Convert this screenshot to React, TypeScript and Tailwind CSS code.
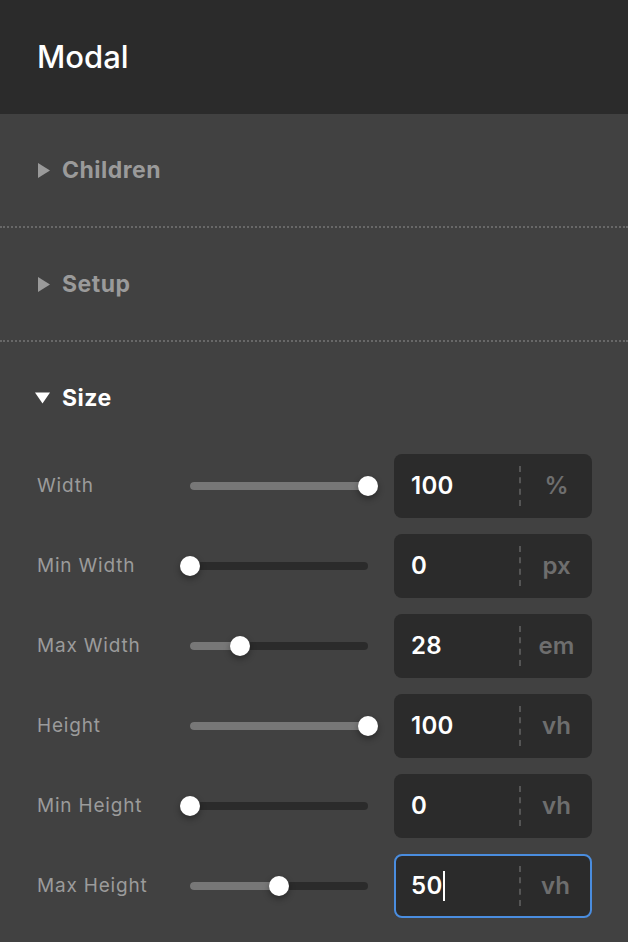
const rows = [
  { label: "Width", value: "100", unit: "%", pct: 100 },
  { label: "Min Width", value: "0", unit: "px", pct: 0 },
  { label: "Max Width", value: "28", unit: "em", pct: 28 },
  { label: "Height", value: "100", unit: "vh", pct: 100 },
  { label: "Min Height", value: "0", unit: "vh", pct: 0 },
  { label: "Max Height", value: "50", unit: "vh", pct: 50, focused: true },
];

const Section = ({ title, open }: { title: string; open?: boolean }) => (
  <div className="h-[112px] flex items-center pl-[35px] gap-[12px]">
    {open ? (
      <svg width="15" height="12" viewBox="0 0 15 12">
        <path d="M0 0.5 H15 L7.5 11.5 Z" fill="#ffffff" />
      </svg>
    ) : (
      <svg width="12" height="15" viewBox="0 0 12 15" className="ml-[3px]">
        <path d="M0 0 L12 7.5 L0 15 Z" fill="#9a9a9a" />
      </svg>
    )}
    <span className={`text-[23px] font-bold tracking-[0.5px] ${open ? "text-white" : "text-[#9a9a9a]"}`}>{title}</span>
  </div>
);

const Row = ({ row }: { row: (typeof rows)[number] }) => (
  <div className="h-[64px] flex items-center">
    <div className="w-[190px] shrink-0 pl-[37px] text-[19px] text-[#9b9b9b] tracking-[0.8px]">{row.label}</div>
    <div className="relative shrink-0 w-[178px] h-[8px] rounded-full bg-[#2b2b2b]">
      <div className="absolute left-0 top-0 h-full rounded-full bg-[#777777]" style={{ width: `${row.pct}%` }} />
      <div
        className="absolute top-1/2 w-[20px] h-[20px] -ml-[10px] -mt-[10px] rounded-full bg-white shadow-[0_3px_6px_rgba(0,0,0,0.35)]"
        style={{ left: `${row.pct}%` }}
      />
    </div>
    <div
      className={`ml-[26px] shrink-0 w-[198px] h-[64px] rounded-[8px] bg-[#2b2b2b] flex items-center ${
        row.focused ? "border-2 border-[#4a8ddf]" : ""
      }`}
    >
      <div className={`h-full flex items-center ${row.focused ? "w-[123px] pl-[15px]" : "w-[125px] pl-[17px]"}`}>
        <span className="text-[24px] font-semibold text-white tracking-[0.3px]">{row.value}</span>
        {row.focused && <span className="w-[2px] h-[30px] bg-white" />}
      </div>
      <div className="h-[40px] border-l-2 border-dashed border-[#555555]" />
      <div className="flex-1 text-center text-[24px] font-semibold text-[#6e6e6e]">{row.unit}</div>
    </div>
  </div>
);

export default function App() {
  return (
    <div className="w-[628px] h-[942px] bg-[#414141] font-['Inter',sans-serif] overflow-hidden">
      <div className="h-[114px] bg-[#2b2b2b] flex items-center pl-[37px]">
        <h1 className="text-[31px] font-medium text-white">Modal</h1>
      </div>
      <div className="border-b-2 border-dotted border-[#686868]">
        <Section title="Children" />
      </div>
      <div className="border-b-2 border-dotted border-[#686868]">
        <Section title="Setup" />
      </div>
      <Section title="Size" open />
      <div className="flex flex-col gap-4">
        {rows.map((r) => (
          <Row key={r.label} row={r} />
        ))}
      </div>
    </div>
  );
}
